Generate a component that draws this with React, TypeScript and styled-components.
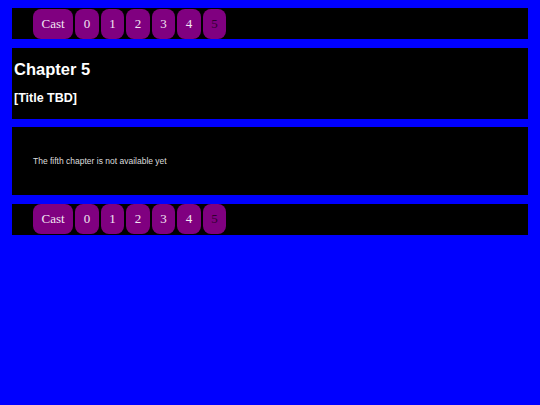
import styled, { createGlobalStyle } from "styled-components";

const GlobalStyle = createGlobalStyle`
  html, body {
    margin: 0;
    background: #0000ff;
  }
  body {
    font-family: "Liberation Sans", Arial, sans-serif;
  }
`;

const Page = styled.div`
  display: flex;
  flex-direction: column;
  gap: 8.5px;
  padding: 8px 12px;
`;

const Nav = styled.nav`
  display: flex;
  align-items: center;
  gap: 2px;
  height: 31px;
  padding-left: 21px;
  background: #000000;
`;

const NavButton = styled.button<{ $current?: boolean }>`
  height: 30px;
  padding: 0 8.5px;
  border: none;
  border-radius: 8px;
  background: #800080;
  color: ${(p) => (p.$current ? "#300030" : "#f2e6f2")};
  font: normal 13px "Liberation Serif", "Times New Roman", serif;
  cursor: pointer;
`;

const ChapterHeader = styled.header`
  height: 71px;
  box-sizing: border-box;
  padding: 12.5px 2px 0;
  background: #000000;
  color: #ffffff;
`;

const ChapterNumber = styled.h1`
  margin: 0 0 12px;
  font-size: 16.5px;
  font-weight: bold;
`;

const ChapterTitle = styled.h2`
  margin: 0;
  font-size: 12.5px;
  font-weight: bold;
`;

const Body = styled.section`
  height: 68px;
  box-sizing: border-box;
  padding: 28.75px 21px 0;
  background: #000000;
  color: #dddddd;
  font-size: 8.5px;
`;

const chapters = ["0", "1", "2", "3", "4", "5"];

const ChapterNav = ({ current }: { current: string }) => (
  <Nav>
    <NavButton>Cast</NavButton>
    {chapters.map((c) => (
      <NavButton key={c} $current={c === current}>
        {c}
      </NavButton>
    ))}
  </Nav>
);

export default function App() {
  return (
    <>
      <GlobalStyle />
      <Page>
        <ChapterNav current="5" />
        <ChapterHeader>
          <ChapterNumber>Chapter 5</ChapterNumber>
          <ChapterTitle>[Title TBD]</ChapterTitle>
        </ChapterHeader>
        <Body>The fifth chapter is not available yet</Body>
        <ChapterNav current="5" />
      </Page>
    </>
  );
}
